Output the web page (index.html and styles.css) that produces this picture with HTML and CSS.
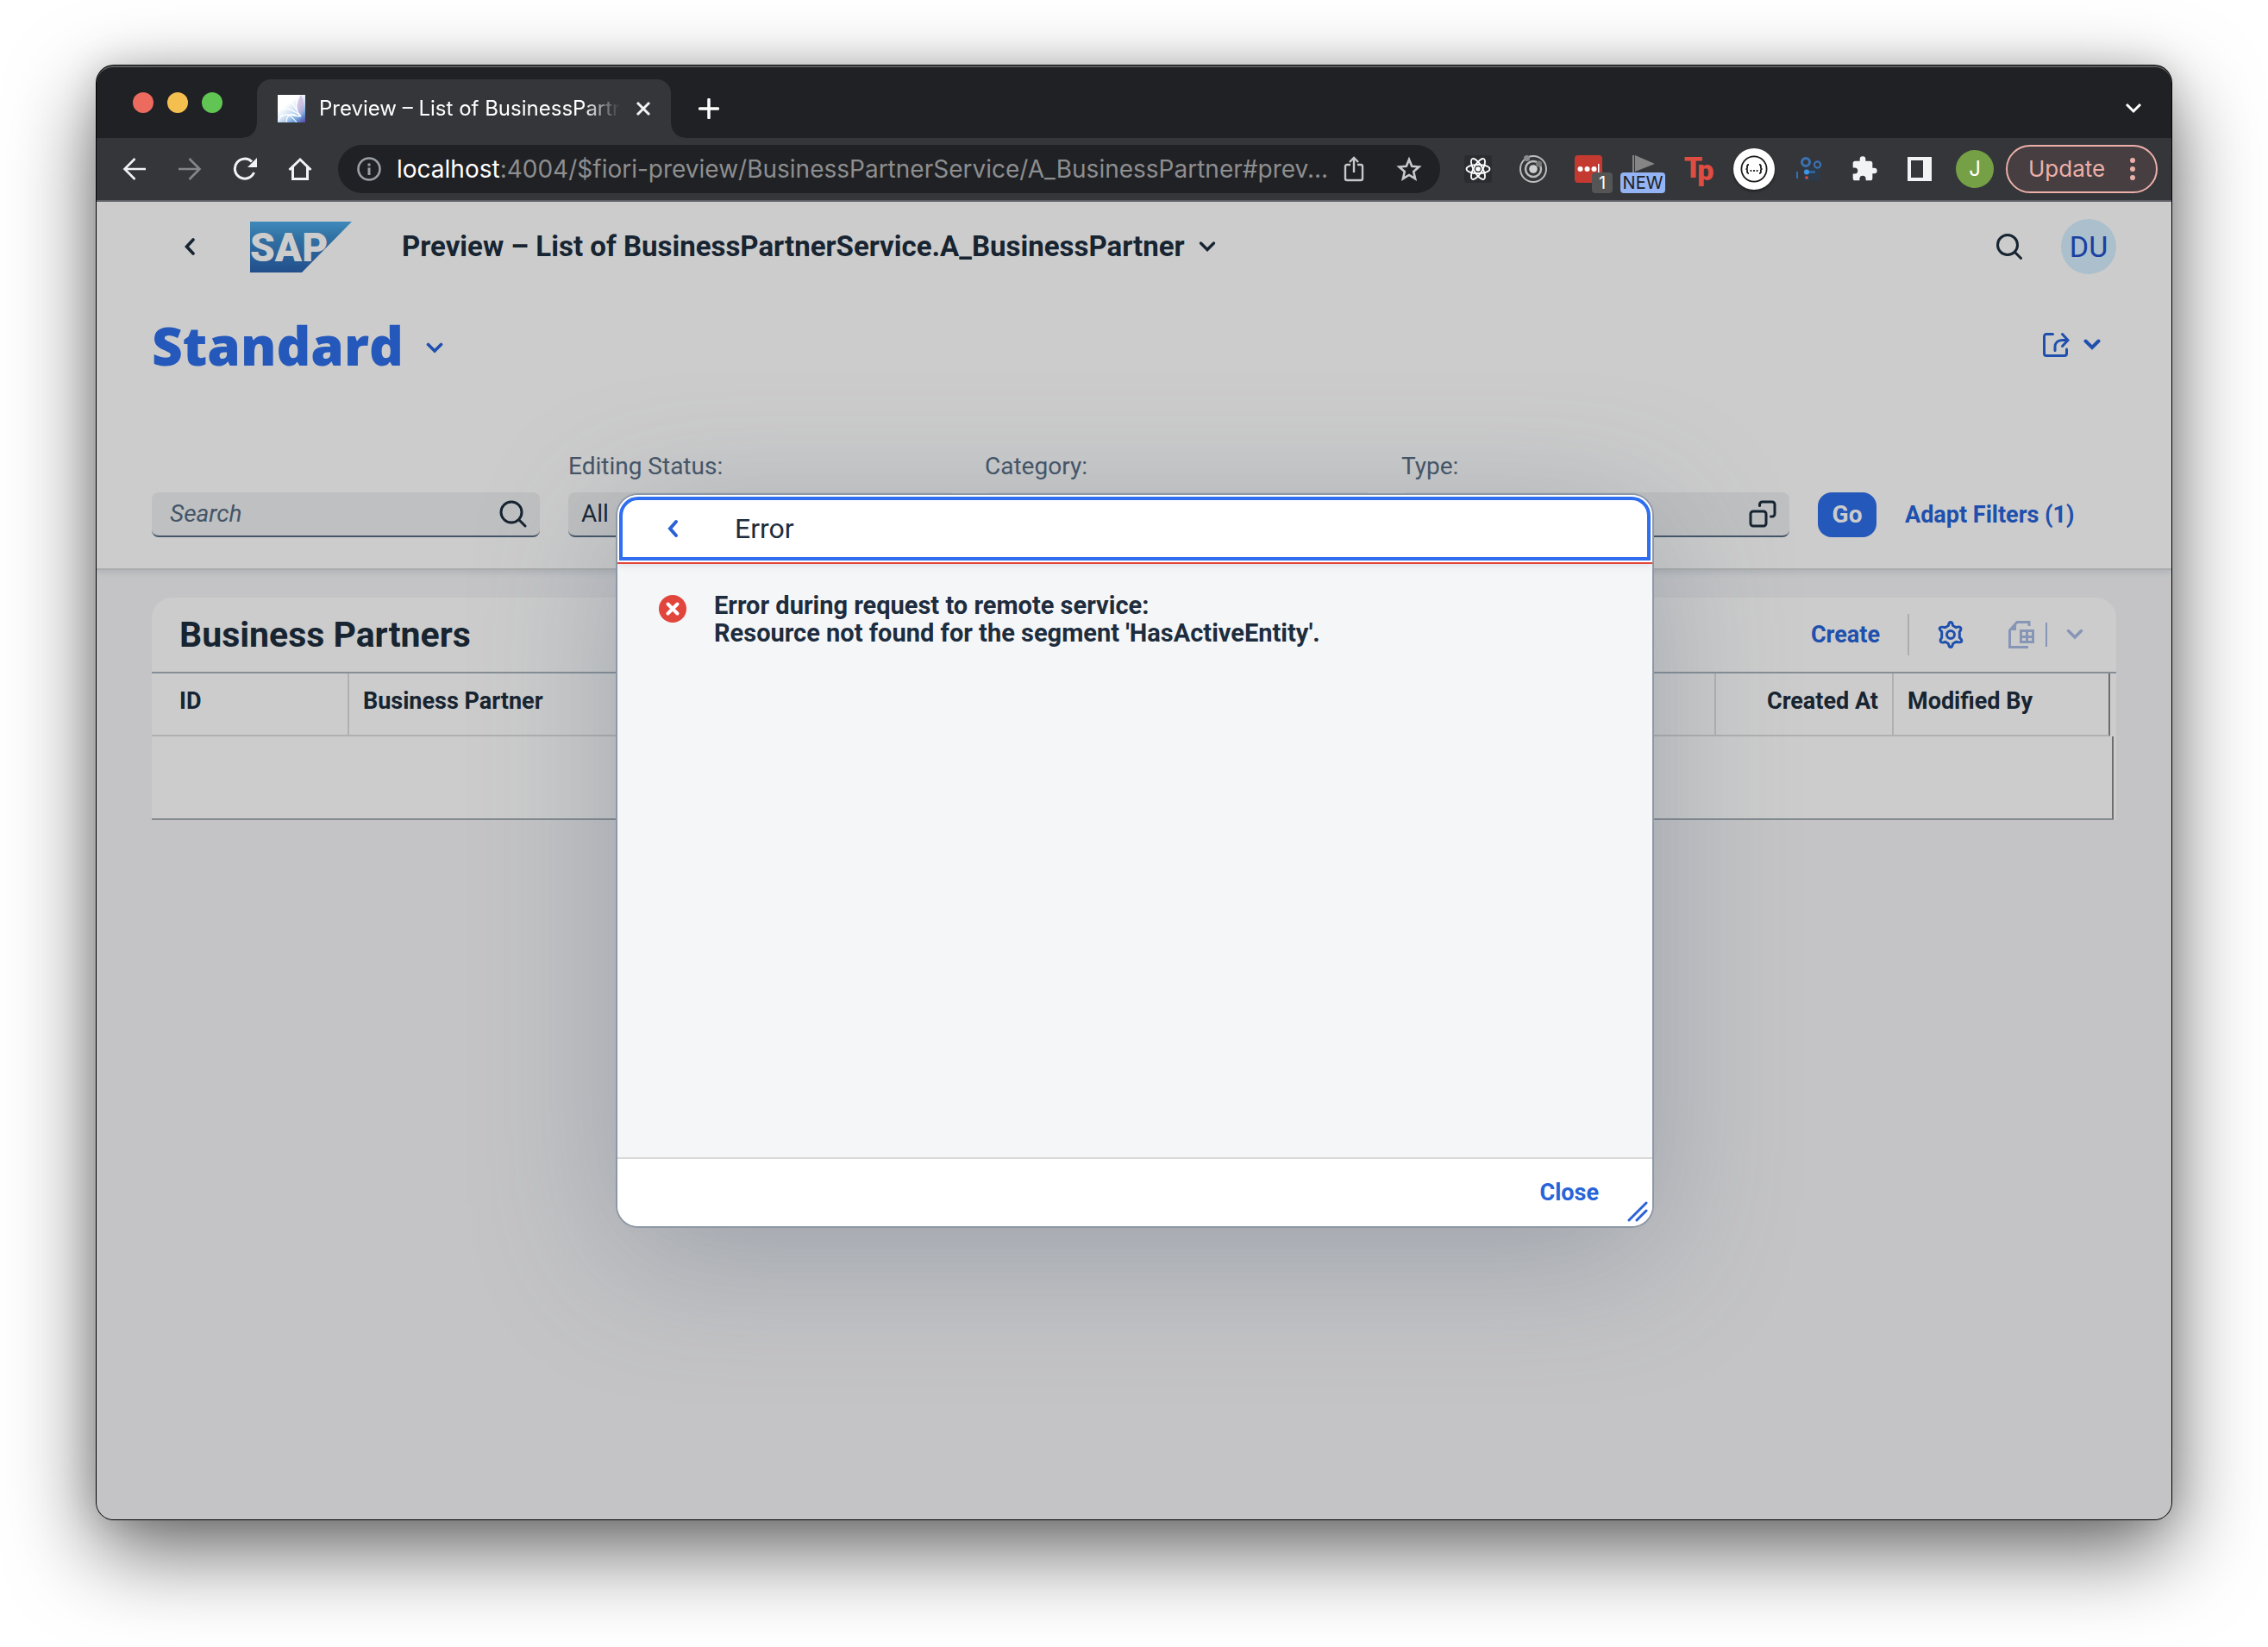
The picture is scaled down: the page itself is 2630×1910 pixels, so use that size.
FILE: index.html
```
<!DOCTYPE html>
<html lang="en">
<head>
<meta charset="utf-8">
<title>Preview – List of BusinessPartnerService.A_BusinessPartner</title>
<link rel="stylesheet" href="styles.css">
</head>
<body>
<div class="window">
  <header class="tabstrip">
    <div class="lights"><span class="light red"></span><span class="light amber"></span><span class="light green"></span></div>
    <div class="tab">
      <svg class="favicon" viewBox="0 0 32 32" aria-hidden="true">
        <defs>
          <linearGradient id="fav" x1="0.2" y1="0.1" x2="0.9" y2="1"><stop offset="0.25" stop-color="#fff"/><stop offset="0.55" stop-color="#c9dcf2"/><stop offset="0.8" stop-color="#6fa3dc"/><stop offset="1" stop-color="#5a55b0"/></linearGradient>
        </defs>
        <path fill="url(#fav)" d="M0 0h32v32H0z"/>
        <path d="M27 0c5 9 4 17 0 25C22 18 22 8 27 0z" fill="#c9a9d4" opacity=".6"/>
        <g fill="none" stroke="#fff" stroke-width="1.2"><path d="M27 25C19 18 12 14 6 17M27 25C20 17 18 9 15 7M27 25c-9 0-16-5-25 0M27 25C20 18 20 8 24 3M0 30c8-12 16-6 22 2M10 32c0-8 6-12 12-8"/></g>
      </svg>
      <span class="tab-title">Preview – List of BusinessPartnerService</span>
      <button class="plain" aria-label="Close tab"><svg width="18" height="18" viewBox="0 0 18 18"><path d="M2 2l14 14M16 2L2 16" stroke="#f1f3f4" stroke-width="3" fill="none"/></svg></button>
    </div>
    <button class="plain new-tab" aria-label="New tab"><svg width="24" height="24" viewBox="0 0 24 24"><path d="M12 1.500v21M1.500 12h21" stroke="#fff" stroke-width="3.500" stroke-linecap="round"/></svg></button>
    <button class="plain tab-search" aria-label="Search tabs"><svg width="20" height="14" viewBox="0 0 20 14"><path d="M2 2l8 8 8-8" stroke="#fff" stroke-width="3" fill="none"/></svg></button>
  </header>

  <nav class="toolbar">
    <button class="cell" aria-label="Back"><svg width="28" height="28" viewBox="0 0 28 28" fill="none" stroke="#f1f3f4" stroke-width="2.6"><path d="M27 14H3M14.500 2L2.500 14l12 12"/></svg></button>
    <button class="cell" aria-label="Forward"><svg width="28" height="28" viewBox="0 0 28 28" fill="none" stroke="#85868a" stroke-width="2.6"><path d="M1 14h24M13.500 2l12 12-12 12"/></svg></button>
    <button class="cell" aria-label="Reload"><svg width="28" height="28" viewBox="0 0 28 28"><path d="M24.500 18A11.500 11.500 0 1 1 22 5.500" fill="none" stroke="#f1f3f4" stroke-width="3"/><path d="M28 1v11H17z" fill="#f1f3f4"/></svg></button>
    <button class="cell" aria-label="Home"><svg width="28" height="28" viewBox="0 0 28 28" fill="none" stroke="#f1f3f4" stroke-width="3"><path d="M1.500 15L14 3l12.500 12M5.500 12v13.500h17V12"/></svg></button>
    <div class="omnibox">
      <svg width="28" height="28" viewBox="0 0 28 28"><circle cx="14" cy="14" r="12.500" fill="none" stroke="#9aa0a6" stroke-width="2.600"/><path d="M12.500 12.500h3V21h-3zM12.500 7.500h3v3h-3z" fill="#9aa0a6"/></svg>
      <div class="url" role="textbox" aria-label="Address"><span class="host">localhost</span>:4004/$fiori-preview/BusinessPartnerService/A_BusinessPartner#prev...</div>
      <button class="cell" aria-label="Share"><svg width="24" height="30" viewBox="0 0 24 30" fill="none" stroke="#c7c8ca" stroke-width="2.400"><path d="M8 10H4a2 2 0 0 0-2 2v14a2 2 0 0 0 2 2h16a2 2 0 0 0 2-2V12a2 2 0 0 0-2-2h-4M12 19V3M7 7l5-5 5 5"/></svg></button>
      <button class="cell" aria-label="Bookmark"><svg width="30" height="30" viewBox="0 0 30 30"><path d="M15 4l3.200 7.800 8.300.7-6.300 5.500 1.900 8.200L15 21.900l-7.100 4.300 1.900-8.200-6.300-5.500 8.300-.7z" fill="none" stroke="#c7c8ca" stroke-width="2.600"/></svg></button>
    </div>
    <div class="extensions">
      <button class="cell" aria-label="React tools"><svg width="32" height="32" viewBox="0 0 32 32"><rect width="32" height="32" rx="3" fill="#2b2c30"/><g fill="none" stroke="#fff" stroke-width="1.800"><ellipse cx="16" cy="16" rx="13.500" ry="5"/><ellipse cx="16" cy="16" rx="13.500" ry="5" transform="rotate(60 16 16)"/><ellipse cx="16" cy="16" rx="13.500" ry="5" transform="rotate(120 16 16)"/></g><circle cx="16" cy="16" r="2.800" fill="#fff"/></svg></button>
      <button class="cell" aria-label="Orbit"><svg width="32" height="32" viewBox="0 0 32 32"><g fill="none" stroke="#bdbdbd" stroke-width="2"><circle cx="16" cy="16" r="15"/><circle cx="16" cy="16" r="9" stroke-width="2.500"/></g><circle cx="16" cy="16" r="4.800" fill="#cfcfcf"/><circle cx="8.500" cy="3.500" r="3.500" fill="#8b8b8d"/><circle cx="22.500" cy="10" r="3.500" fill="#77787a"/></svg></button>
      <button class="cell" aria-label="Password manager"><svg width="32" height="32" viewBox="0 0 32 32"><rect width="32" height="32" rx="4" fill="#c53a30"/><g fill="#fff"><circle cx="6.500" cy="16" r="3"/><circle cx="14.500" cy="16" r="3"/><circle cx="22.500" cy="16" r="3"/><path d="M27 10h1.500v10H27z"/></g></svg><span class="badge count">1</span></button>
      <button class="cell" aria-label="Player"><svg width="28" height="32" viewBox="0 0 28 32"><path d="M2 0v22" stroke="#858585" stroke-width="2"/><path d="M4 0l23 10L4 19z" fill="#858585"/></svg><span class="badge new">NEW</span></button>
      <button class="cell tp" aria-label="Tp"><span class="tp-t">T</span><span class="tp-p">p</span></button>
      <button class="cell" aria-label="JSON tools"><span class="json"><svg width="32" height="32" viewBox="0 0 32 32" fill="none" stroke="#1c1c1c"><circle cx="16" cy="16" r="14.600" stroke-width="1.800"/><path d="M10 11c-4 0 0 5-3.500 5 3.500 0-.5 5 3.500 5M22 11c4 0 0 5 3.500 5-3.500 0 .5 5-3.500 5" stroke-width="1.800"/><path d="M11.500 18h1.800M15.100 18h1.800M18.700 18h1.800" stroke-width="1.800"/></svg></span></button>
      <button class="cell" aria-label="Service graph"><svg width="34" height="32" viewBox="0 0 34 32"><path d="M10 14h20v16H10z" fill="#2d3a4a"/><g fill="none" stroke="#3a72b4"><circle cx="13" cy="8" r="4.500" stroke-width="3"/><circle cx="26.500" cy="11" r="3.600" stroke-width="2.200"/></g><path d="M2 19h2v8H2z" fill="#2f6fb8"/><circle cx="14" cy="19.500" r="3" fill="#3f95e6"/><path d="M17 18h7v3h-7z" fill="#2f6299"/><circle cx="14" cy="26" r="1.800" fill="#e2503f"/></svg></button>
      <button class="cell" aria-label="Extensions"><svg width="32" height="32" viewBox="0 0 24 24" fill="#f1f3f4"><path d="M20.500 11H19V7a2 2 0 0 0-2-2h-4V3.500a2.500 2.500 0 0 0-5 0V5H4a2 2 0 0 0-2 2v3.800h1.500a2.700 2.700 0 0 1 0 5.400H2V20a2 2 0 0 0 2 2h3.800v-1.500a2.700 2.700 0 0 1 5.400 0V22H17a2 2 0 0 0 2-2v-4h1.500a2.500 2.500 0 0 0 0-5z"/></svg></button>
      <button class="cell" aria-label="Side panel"><svg width="28" height="28" viewBox="0 0 28 28"><path fill="#f1f3f4" fill-rule="evenodd" d="M0 0h28v28H0zM4 4v20h14V4z"/></svg></button>
    </div>
    <button class="profile" aria-label="Profile">J</button>
    <button class="update">Update <svg width="6" height="26" viewBox="0 0 6 26" fill="#ecb0a9"><circle cx="3" cy="3" r="3"/><circle cx="3" cy="13" r="3"/><circle cx="3" cy="23" r="3"/></svg></button>
  </nav>

  <div class="viewport">
    <main class="app">
      <section class="page-head">
        <div class="shell">
          <button class="cell" aria-label="Navigate back"><svg width="12" height="20" viewBox="0 0 12 20"><path d="M10 2l-7.500 8L10 18" fill="none" stroke="#1d2d3e" stroke-width="3.600" stroke-linecap="round"/></svg></button>
          <svg class="logo" viewBox="0 0 118 59" role="img" aria-label="SAP">
            <defs><linearGradient id="sap" x1="0" y1="0" x2="0" y2="1"><stop offset="0" stop-color="#4eadea"/><stop offset="0.3" stop-color="#3f8fce"/><stop offset="1" stop-color="#2b63b0"/></linearGradient></defs>
            <path d="M0 0h118L60 59H0z" fill="url(#sap)"/>
            <text class="logo-text" x="0" y="46">SAP</text>
          </svg>
          <h1 class="shell-title"><button class="plain">Preview – List of BusinessPartnerService.A_BusinessPartner <svg width="20" height="14" viewBox="0 0 20 14"><path d="M2.500 3l7.500 7.500L17.500 3" fill="none" stroke="#1d2d3e" stroke-width="3.400" stroke-linecap="round"/></svg></button></h1>
          <button class="cell shell-search" aria-label="Search"><svg width="32" height="32" viewBox="0 0 32 32" fill="none" stroke="#1d2d3e" stroke-width="3" stroke-linecap="round"><circle cx="14" cy="14" r="11.500"/><path d="M22.500 22.500l7 7"/></svg></button>
          <button class="avatar">DU</button>
        </div>

        <div class="variant">
          <h2><button class="plain variant-name">Standard <svg width="20" height="22" viewBox="0 0 20 22"><path d="M2.500 10.500L10 18l7.500-7.500" fill="none" stroke="#2764d9" stroke-width="3.600" stroke-linecap="round"/></svg></button></h2>
          <button class="plain share" aria-label="Share menu">
            <svg width="31" height="30" viewBox="0 0 31 30" fill="none" stroke="#2764d9" stroke-width="3" stroke-linecap="round"><path d="M11.500 2.500H4a2.500 2.500 0 0 0-2.500 2.500v20A2.500 2.500 0 0 0 4 27.500h21a2.500 2.500 0 0 0 2.500-2.500v-5M14 21.500v-4c0-5 3.500-8 8-8h6M22.500 2.500l6.500 7-6.500 7"/></svg>
            <svg width="20" height="14" viewBox="0 0 20 14"><path d="M2.500 2.500L10 10l7.500-7.500" fill="none" stroke="#2764d9" stroke-width="4" stroke-linecap="round"/></svg>
          </button>
        </div>

        <form class="filters" onsubmit="return false">
          <div class="field">
            <div class="control"><input class="search" type="text" placeholder="Search" aria-label="Search"><button class="plain" type="button" aria-label="Start search"><svg width="32" height="32" viewBox="0 0 32 32" fill="none" stroke="#1d2d3e" stroke-width="3" stroke-linecap="round"><circle cx="14" cy="14" r="12"/><path d="M23 23l7 7"/></svg></button></div>
          </div>
          <div class="field">
            <label for="status">Editing Status:</label>
            <div class="control"><select id="status"><option>All</option></select></div>
          </div>
          <div class="field">
            <label for="category">Category:</label>
            <div class="control"><input id="category" type="text"></div>
          </div>
          <div class="field">
            <label for="type">Type:</label>
            <div class="control"><input id="type" type="text"><button class="plain" type="button" aria-label="Value help"><svg width="32" height="32" viewBox="0 0 32 32" fill="none" stroke="#1d2d3e" stroke-width="3" stroke-linecap="round"><rect x="2" y="13" width="18" height="17" rx="3"/><path d="M12.500 6.500V5a3 3 0 0 1 3-3H27a3 3 0 0 1 3 3v11a3 3 0 0 1-3 3h-1.500"/></svg></button></div>
          </div>
          <button class="go" type="submit">Go</button>
          <button class="plain link" type="button">Adapt Filters (1)</button>
        </form>
      </section>

      <section class="card">
        <div class="card-bar">
          <h3>Business Partners</h3>
          <button class="plain link">Create</button>
          <span class="divider"></span>
          <button class="plain" aria-label="Settings"><svg width="32" height="32" viewBox="0 0 32 32" fill="none" stroke="#2764d9" stroke-width="3" stroke-linejoin="round"><path d="M13.400 5.500Q14 1.500 16 1.500T18.600 5.500L22.300 7.700Q26.500 6 27.600 7.900T26.300 12.500V19.500Q29.600 22.200 28.600 23.900T22.300 24.300L18.600 26.500Q18 30.500 16 30.500T13.400 26.500L9.700 24.300Q5.400 26 4.400 24.100T5.700 19.500V12.500Q2.400 9.800 3.400 8.100T9.700 7.700Z"/><circle cx="16" cy="16" r="4.500"/></svg></button>
          <button class="plain export" aria-label="Export" disabled><svg width="32" height="32" viewBox="0 0 32 32" fill="none" stroke="#a9bbe4" stroke-width="3"><path d="M25 6V1.500H11L2.500 11v19.500H24"/><path d="M3 11h7V2z" fill="#a9bbe4" stroke="none"/><path fill="#a9bbe4" stroke="none" fill-rule="evenodd" d="M14 10h17v16H14zM17 13v4h4v-4zM24 13v4h4v-4zM17 20v3h4v-3zM24 20v3h4v-3z"/></svg></button>
          <span class="divider small"></span>
          <button class="plain export-menu" aria-label="Export options" disabled><svg width="20" height="14" viewBox="0 0 20 14"><path d="M2.500 2.500L10 10l7.500-7.500" fill="none" stroke="#a9bbe4" stroke-width="3.400" stroke-linecap="round"/></svg></button>
        </div>
        <table>
          <colgroup><col class="c-id"><col><col class="c-created"><col class="c-modified"><col class="c-tail"></colgroup>
          <thead><tr><th scope="col">ID</th><th scope="col">Business Partner</th><th scope="col" class="end">Created At</th><th scope="col" class="last">Modified By</th><td class="tail"></td></tr></thead>
          <tbody><tr><td colspan="5"></td></tr></tbody>
        </table>
      </section>
    </main>

    <div class="overlay">
      <div class="dialog" role="dialog" aria-modal="true" aria-labelledby="dlg-title">
        <div class="dialog-head"><div class="dialog-focus">
          <button class="cell" aria-label="Back to messages"><svg width="14" height="22" viewBox="0 0 14 22"><path d="M11 3l-7 8 7 8" fill="none" stroke="#2a62d6" stroke-width="4" stroke-linecap="round"/></svg></button>
          <h2 id="dlg-title">Error</h2>
        </div></div>
        <div class="dialog-body">
          <svg width="32" height="32" viewBox="0 0 32 32"><circle cx="16" cy="16" r="16" fill="#e2453c"/><path d="M10.500 10.500l11 11M21.500 10.500l-11 11" stroke="#fff" stroke-width="4" stroke-linecap="round"/></svg>
          <p>Error during request to remote service:<br>Resource not found for the segment 'HasActiveEntity'.</p>
        </div>
        <div class="dialog-foot">
          <button class="plain link">Close</button>
          <svg class="grip" width="24" height="24" viewBox="0 0 24 24" fill="none" stroke="#2a62d6" stroke-width="3" stroke-linecap="round"><path d="M2 22L22 2M11 22l11-11"/></svg>
        </div>
      </div>
    </div>
  </div>
</div>
</body>
</html>
```
FILE: styles.css
```
* { box-sizing: border-box; }

body {
  margin: 0;
  min-height: 100vh;
  padding: 76px 112px 148px;
  display: flex;
  background: #fff;
  color: #1d2d3e;
  font: 28px/36px Roboto, "Liberation Sans", sans-serif;
}

h1, h2, h3, p { margin: 0; font: inherit; }
svg { display: block; flex: none; }
button, input, select { font: inherit; color: inherit; }
button { margin: 0; padding: 0; border: 0; background: none; }

.plain { display: flex; align-items: center; }
.cell {
  position: relative;
  width: 64px;
  height: 56px;
  flex: none;
  display: flex;
  align-items: center;
  justify-content: center;
}

/* Browser window */
.window {
  flex: 1;
  min-width: 0;
  display: flex;
  flex-direction: column;
  overflow: hidden;
  border-radius: 20px;
  background: #35363a;
  box-shadow: 0 0 0 1px #000, 0 36px 100px rgba(0, 0, 0, .6), 0 0 40px rgba(0, 0, 0, .15);
}

.tabstrip {
  height: 84px;
  padding: 0 34px 0 42px;
  display: flex;
  align-items: center;
  background: #202124;
  border-top: 2px solid #5b5e5d;
  border-radius: 20px 20px 0 0;
}
.lights { display: flex; gap: 16px; margin: 0 40px 0 0; }
.light { width: 24px; height: 24px; border-radius: 50%; }
.red { background: #ed6a5e; }
.amber { background: #f5bf4f; }
.green { background: #61c554; }

.tab {
  position: relative;
  align-self: flex-end;
  width: 480px;
  height: 68px;
  padding: 0 23px 0 24px;
  display: flex;
  align-items: center;
  border-radius: 16px 16px 0 0;
  background: #35363a;
  color: #fff;
  font: 24px/32px Inter, "Liberation Sans", sans-serif;
}
.tab::before, .tab::after {
  content: "";
  position: absolute;
  bottom: 0;
  width: 16px;
  height: 16px;
}
.tab::before { left: -16px; background: radial-gradient(circle at 0 0, transparent 15px, #35363a 16px); }
.tab::after { right: -16px; background: radial-gradient(circle at 100% 0, transparent 15px, #35363a 16px); }
.favicon { width: 32px; height: 32px; margin-right: 16px; }
.tab-title {
  flex: 1;
  overflow: hidden;
  margin-right: 18px;
  white-space: nowrap;
  -webkit-mask-image: linear-gradient(to right, #000 88%, transparent);
  mask-image: linear-gradient(to right, #000 88%, transparent);
}
.new-tab, .tab-search { align-self: flex-end; height: 68px; }
.new-tab { margin-left: 32px; }
.tab-search { margin-left: auto; }

.toolbar {
  height: 74px;
  padding: 0 16px 0 12px;
  display: flex;
  align-items: center;
  border-bottom: 2px solid #5f6064;
  font-family: Inter, "Liberation Sans", sans-serif;
}
.omnibox {
  flex: 1;
  min-width: 0;
  height: 56px;
  margin: 0 12px;
  padding: 0 4px 0 22px;
  display: flex;
  align-items: center;
  border-radius: 28px;
  background: #202124;
}
.url {
  flex: 1;
  min-width: 0;
  margin-left: 18px;
  white-space: nowrap;
  color: #8d8e90;
  font-size: 28px;
}
.host { color: #fff; }
.extensions { display: flex; }
.badge {
  position: absolute;
  bottom: 0;
  height: 24px;
  border-radius: 4px;
  font-size: 20px;
  line-height: 25px;
  text-align: center;
}
.count { left: 36px; width: 24px; background: #555; color: #fff; }
.new { left: 5px; width: 52px; background: #94b4f4; color: #202124; }
.tp { color: #df4c41; font: 900 34px/32px Roboto, sans-serif; }
.tp-t { margin-bottom: 4px; }
.tp-p { margin: 2px 0 0 -6px; }
.json {
  width: 48px;
  height: 48px;
  display: grid;
  place-items: center;
  border-radius: 50%;
  background: #fff;
  box-shadow: 0 2px 3px rgba(0, 0, 0, .4);
}
.profile {
  width: 44px;
  height: 44px;
  margin-left: 10px;
  border-radius: 50%;
  background: #76a045;
  color: #fff;
  font-size: 24px;
}
.update {
  width: 176px;
  height: 56px;
  margin-left: 14px;
  padding: 0 24px;
  display: flex;
  align-items: center;
  justify-content: space-between;
  border: 2px solid #ecb0a9;
  border-radius: 28px;
  background: #463e41;
  color: #ecb0a9;
  font-size: 26px;
}

/* Application page */
.viewport { position: relative; flex: 1; display: flex; }
.app { flex: 1; min-width: 0; background: #f5f6f8; }
.page-head {
  padding: 0 64px 36px;
  background: #fff;
  border-bottom: 2px solid #d9d9d9;
  box-shadow: 0 2px 8px rgba(85, 107, 130, .2);
}
.shell { height: 104px; padding-left: 12px; display: flex; align-items: center; }
.logo { width: 118px; height: 59px; margin: 0 58px 0 38px; }
.logo-text { fill: #fff; font: 900 46px Roboto, sans-serif; }
.shell-title { flex: 1; font-size: 33px; font-weight: 700; }
.shell-title .plain { gap: 16px; }
.shell-search { margin-right: 28px; }
.avatar {
  width: 64px;
  height: 64px;
  border-radius: 50%;
  background: #d6efff;
  color: #2250ca;
  font-size: 34px;
}

.variant { height: 124px; padding-right: 18px; display: flex; align-items: center; justify-content: space-between; }
.variant-name { gap: 26px; color: #2e6eea; font: 800 62px/72px "Open Sans", "Noto Sans", sans-serif; }
.share { gap: 16px; }

.filters { padding-top: 61px; display: flex; align-items: flex-end; gap: 33px; }
.field { flex: 0 1 450px; min-width: 0; display: flex; flex-direction: column; gap: 12px; }
label { color: #556b82; }
.control {
  height: 52px;
  padding: 0 15px 0 0;
  display: flex;
  align-items: center;
  border-radius: 8px;
  border-bottom: 2px solid #556b82;
  background: #eff1f2;
}
.control input, .control select {
  flex: 1;
  min-width: 0;
  padding: 0 0 0 15px;
  border: 0;
  outline: 0;
  background: none;
  appearance: none;
}
.control .search { padding-left: 21px; }
.search::placeholder { color: #556b82; font-style: italic; opacity: 1; }
.go {
  width: 68px;
  height: 52px;
  border-radius: 16px;
  background: #2e6eea;
  color: #fff;
  font-weight: 700;
}
.link { color: #2764d9; font-size: 27px; font-weight: 700; }
.filters .link { height: 52px; }

.card { margin: 32px 64px 0; border-radius: 24px 24px 0 0; background: #fff; }
.card-bar {
  height: 88px;
  padding: 0 38px 0 32px;
  display: flex;
  align-items: center;
  border-bottom: 2px solid #a8b3bf;
}
.card-bar h3 { flex: 1; font-size: 41px; font-weight: 700; }
.divider { width: 2px; height: 48px; margin: 0 32px; background: #d9d9d9; }
.divider.small { height: 28px; margin: 0 22px 0 12px; background: #a9bbe4; }
.export { margin-left: 50px; }

table { width: calc(100% - 3px); table-layout: fixed; border-collapse: separate; border-spacing: 0; }
.c-id { width: 229px; }
.c-created { width: 206px; }
.c-modified { width: 251px; }
.c-tail { width: 4px; }
th {
  height: 73px;
  padding: 0 16px 7px;
  border-right: 2px solid #dcdcdc;
  border-bottom: 2px solid #dcdcdc;
  text-align: left;
  font-size: 27px;
  font-weight: 700;
}
th:first-child { padding-left: 32px; }
th.end { text-align: right; }
th.last { border-right-color: #8a8a8a; }
.tail { padding: 0; }
tbody td { height: 97px; padding: 0; border-right: 2px solid #8a8a8a; border-bottom: 2px solid #a4adb5; }

/* Message dialog */
.overlay {
  position: absolute;
  inset: 0;
  padding-left: 2px;
  display: grid;
  place-items: center;
  background: rgba(0, 0, 0, .2);
}
.dialog {
  width: min(1200px, 90%);
  height: 848px;
  display: flex;
  flex-direction: column;
  overflow: hidden;
  border-radius: 24px;
  background: #f5f6f8;
  box-shadow: 0 0 0 2px #8d98a6, 0 32px 160px rgba(80, 98, 116, .36);
}
.dialog-head { padding: 2px; background: #fff; border-bottom: 2px solid #e2453c; box-shadow: 0 2px 8px rgba(85, 107, 130, .15); }
.dialog-focus {
  height: 74px;
  padding-left: 26px;
  display: flex;
  align-items: center;
  border: 4px solid #2e6eef;
  border-radius: 22px 22px 0 0;
}
.dialog-focus h2 { margin-left: 40px; font-size: 32px; }
.dialog-body { flex: 1; padding: 32px 48px; display: flex; align-items: flex-start; gap: 32px; }
.dialog-body svg { margin-top: 4px; }
.dialog-body p { font-size: 29px; font-weight: 700; line-height: 32px; }
.dialog-foot {
  position: relative;
  height: 80px;
  padding-right: 62px;
  display: flex;
  justify-content: flex-end;
  border-top: 2px solid #d9d9d9;
  background: #fff;
}
.grip { position: absolute; right: 5px; bottom: 5px; }
```
